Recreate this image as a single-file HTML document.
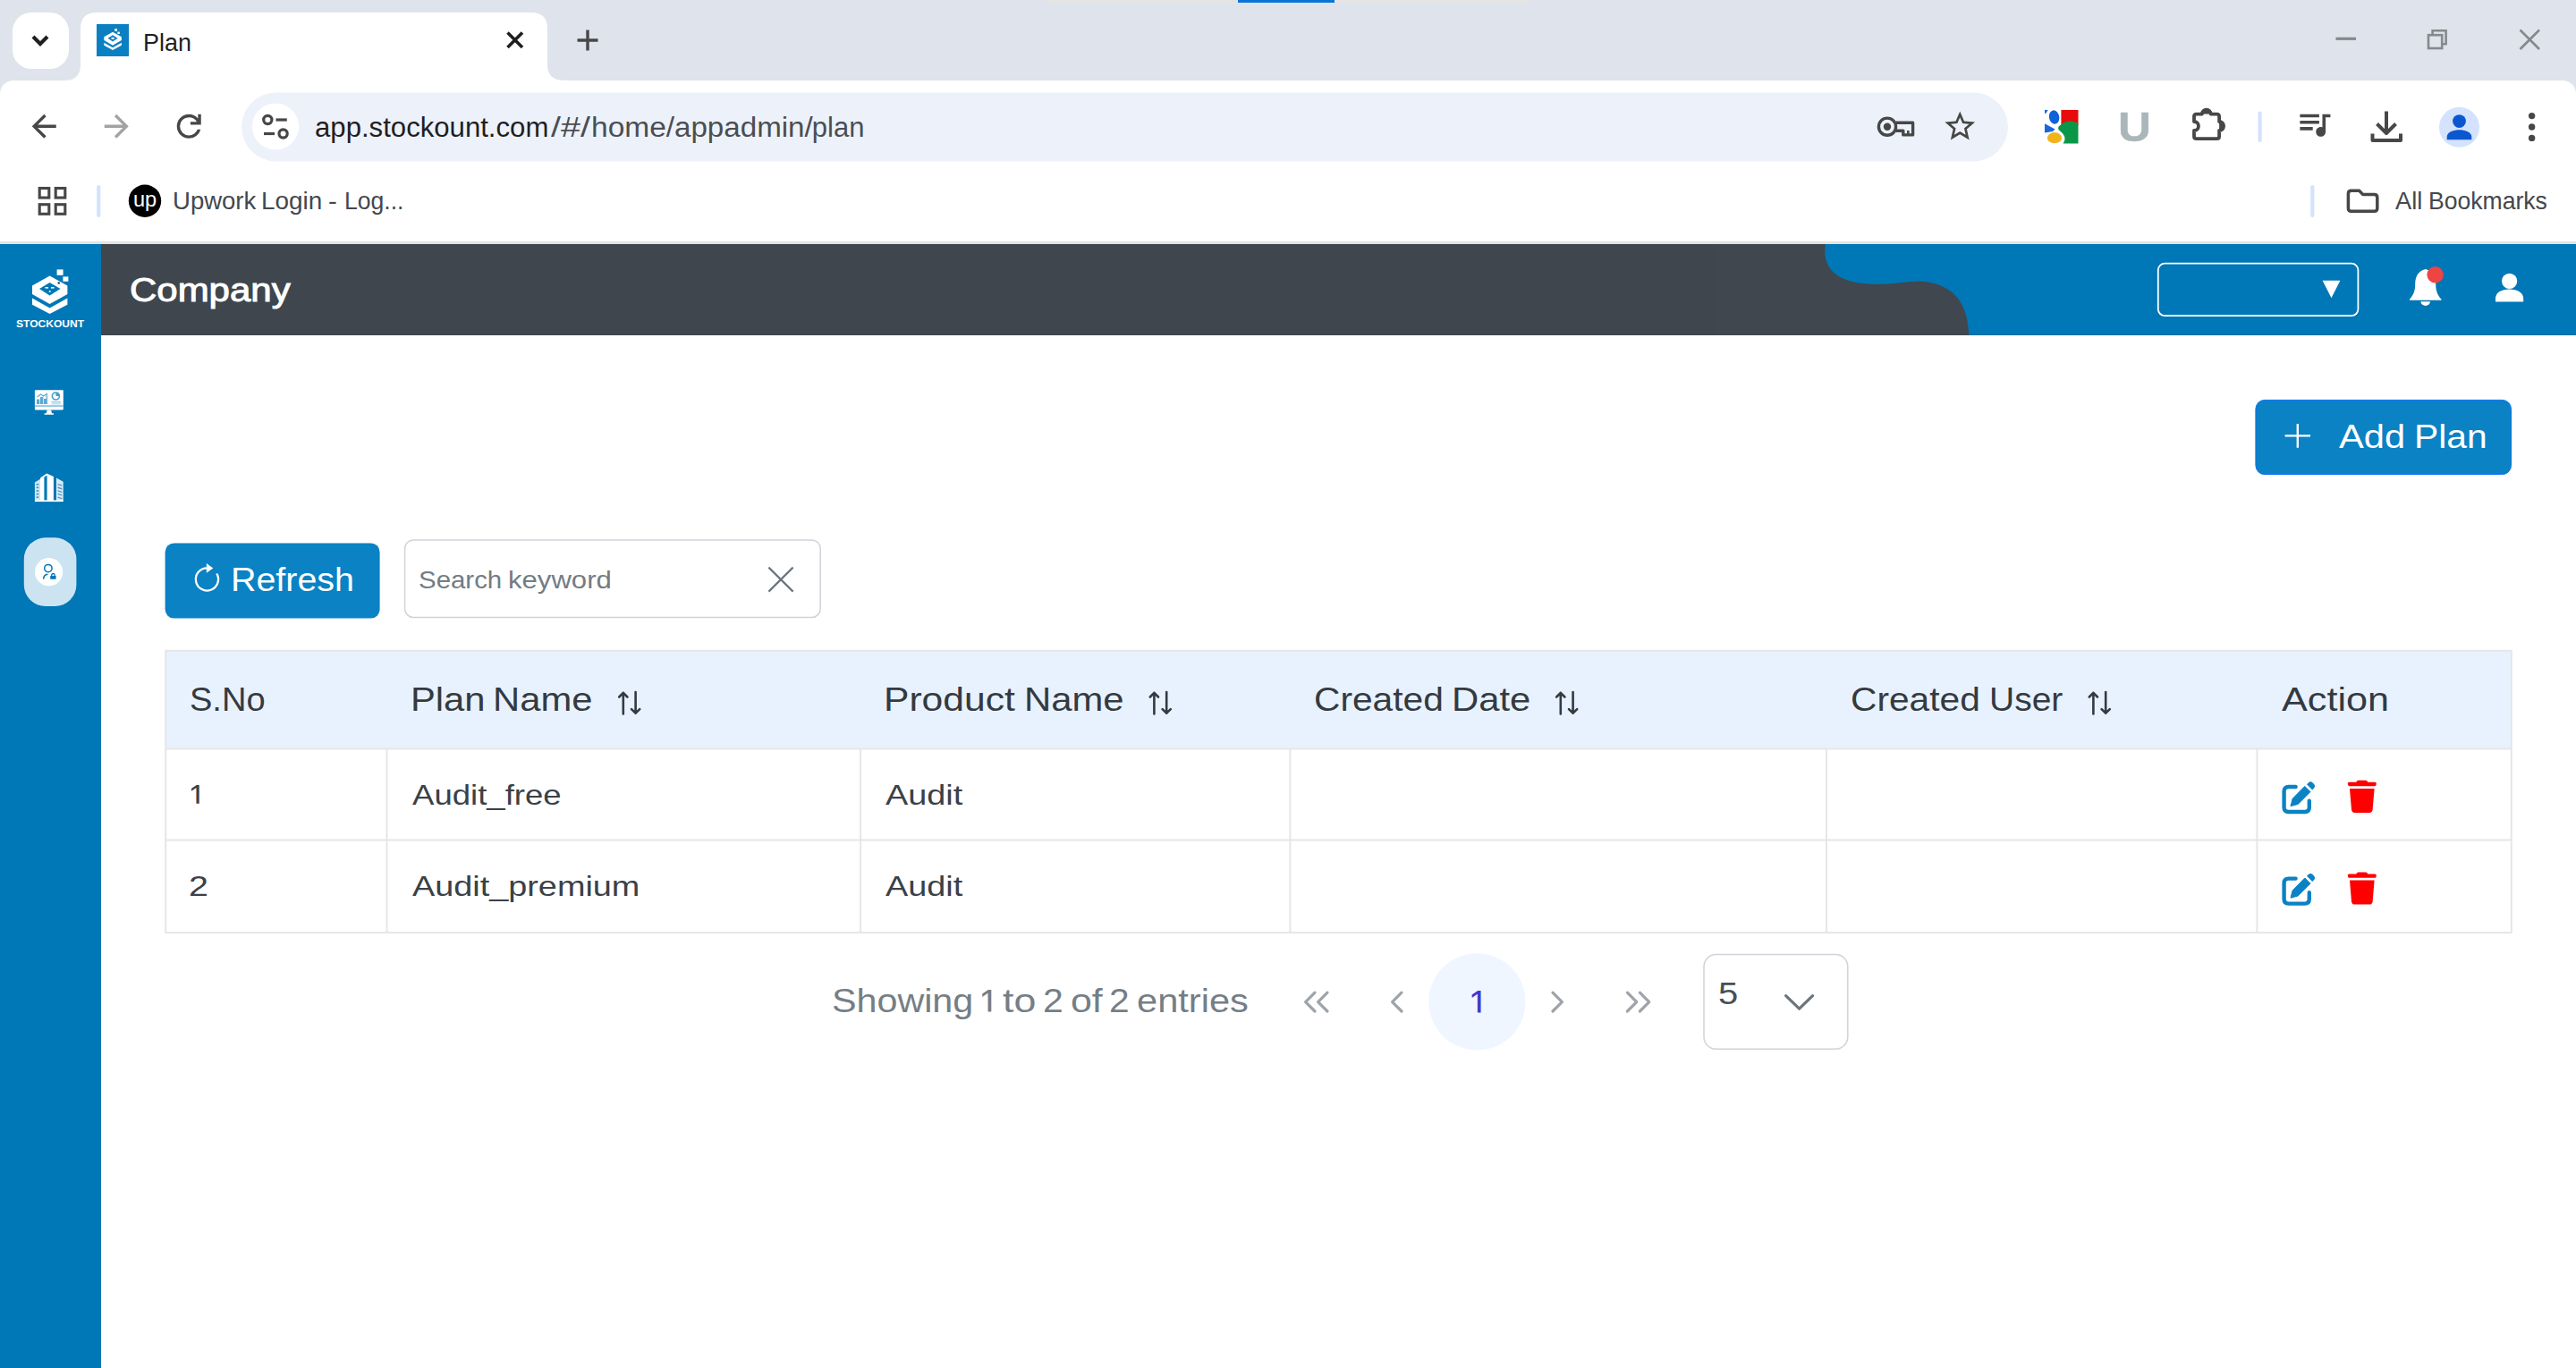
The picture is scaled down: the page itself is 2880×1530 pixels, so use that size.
<!DOCTYPE html>
<html lang="en"><head><meta charset="utf-8"><title>Plan</title>
<style>
html,body{margin:0;padding:0}
body{width:2880px;height:1530px;overflow:hidden;position:relative;background:#fff;
font-family:"Liberation Sans",sans-serif}
.a{position:absolute}
.t{position:absolute;white-space:nowrap;line-height:1;transform-origin:0 0;display:block}
svg{position:absolute;overflow:visible}
</style></head><body>
<div class="a" style="left:0;top:0;width:2880px;height:112px;background:#dee3ec"></div>
<div class="a" style="left:1168px;top:0;width:543px;height:3px;background:#e4e4e4"></div>
<div class="a" style="left:1384px;top:0;width:108px;height:3px;background:#0b74d9"></div>
<div class="a" style="left:14px;top:14px;width:63px;height:63px;border-radius:21px;background:#fff"></div>
<svg style="left:0;top:0" width="2880" height="273" viewBox="0 0 2880 273">
<path d="M37 41 L45 49 L53 41" fill="none" stroke="#1f1f1f" stroke-width="4.2"/>
<path d="M72 90 C84 90 90 84 90 72 L90 32 C90 20 96 14 108 14 L594 14 C606 14 612 20 612 32 L612 72 C612 84 618 90 632 90 Z" fill="#fff"/>
<path d="M0 273 L0 106 C0 96 6 90 16 90 L2864 90 C2874 90 2880 96 2880 106 L2880 273 Z" fill="#fff"/>
<rect x="0" y="270" width="2880" height="3" fill="#e1e3e3"/>
<rect x="270" y="103.5" width="1975" height="77" rx="38.5" fill="#edf2fa"/>
<circle cx="308" cy="141.5" r="26" fill="#fff"/>
<g fill="none" stroke="#474747" stroke-width="3.2"><circle cx="299.3" cy="134" r="4.6"/><path d="M308.5 134 H320.8"/><path d="M295 149.5 H307"/><circle cx="316.6" cy="149.5" r="4.6"/></g>
<path d="M567.5 36.5 L584 53 M584 36.5 L567.5 53" stroke="#1f1f1f" stroke-width="3.6" fill="none"/>
<path d="M645.5 45 H668.5 M657 33.5 V56.5" stroke="#474747" stroke-width="3.4" fill="none"/>
<g stroke="#85898d" fill="none" stroke-width="2.6"><path d="M2611.5 43.3 H2634" stroke-width="3.2"/><rect x="2715" y="39.2" width="15.2" height="14.8"/><path d="M2719.6 39 V34.3 H2734.6 V49.2 H2730.4"/><path d="M2817.5 33.5 L2839 55 M2839 33.5 L2817.5 55"/></g>
<rect x="2524.5" y="124.5" width="4.2" height="34.5" rx="2" fill="#d3e3fd"/>
<rect x="108.2" y="207.0" width="4.2" height="36.0" rx="2" fill="#d3e3fd"/>
<rect x="2583.2" y="207.0" width="4.2" height="36.0" rx="2" fill="#d3e3fd"/>
</svg>
<svg style="left:29.45px;top:121.35px" width="40.50" height="40.50" viewBox="0 0 24 24"><path d="M20 11H7.83l5.59-5.59L12 4l-8 8 8 8 1.41-1.41L7.83 13H20v-2z" fill="#474747" /></svg>
<svg style="left:109.95px;top:121.35px" width="40.50" height="40.50" viewBox="0 0 24 24"><path d="M12 4l-1.41 1.41L16.17 11H4v2h12.17l-5.58 5.59L12 20l8-8z" fill="#a3a3a3" /></svg>
<svg style="left:191.25px;top:121.35px" width="40.50" height="40.50" viewBox="0 0 24 24"><path d="M12 20q-3.35 0-5.675-2.325T4 12q0-3.35 2.325-5.675T12 4q1.725 0 3.3.712T18 6.75V4h2v7h-7V9h4.2q-.8-1.4-2.187-2.2T12 6Q9.5 6 7.75 7.75T6 12q0 2.5 1.75 4.25T12 18q1.925 0 3.475-1.1T17.65 14h2.1q-.7 2.65-2.85 4.325T12 20Z" fill="#474747" /></svg>
<svg style="left:2170.75px;top:121.25px" width="40.50" height="40.50" viewBox="0 0 24 24"><path d="M22 9.24l-7.19-.62L12 2 9.19 8.63 2 9.24l5.46 4.73L5.82 21 12 17.27 18.18 21l-1.63-7.03L22 9.24zM12 15.4l-3.76 2.27 1-4.28-3.32-2.88 4.38-.38L12 6.1l1.71 4.04 4.38.38-3.32 2.88 1 4.28L12 15.4z" fill="#474747" /></svg>
<svg style="left:2565.70px;top:117.10px" width="43.00" height="43.00" viewBox="0 0 24 24"><path d="M15 6H3v2h12V6zm0 4H3v2h12v-2zM3 16h8v-2H3v2zM17 6v8.18c-.31-.11-.65-.18-1-.18-1.66 0-3 1.34-3 3s1.34 3 3 3 3-1.34 3-3V8h3V6h-5z" fill="#474747" /></svg>
<svg style="left:0;top:0" width="2880" height="273" viewBox="0 0 2880 273"><g fill="none" stroke="#474747" stroke-width="3.4" stroke-linejoin="round"><path d="M2119.6 137.3 H2138.6 V150.9 H2127.8 V146.2 H2119.6"/><circle cx="2110" cy="141.7" r="9.6"/></g><circle cx="2110" cy="141.7" r="4.2" fill="#474747"/><rect x="2132" y="146" width="2.6" height="5" fill="#474747"/><g fill="none" stroke="#474747" stroke-width="4" stroke-linejoin="round"><path d="M2668 124.5 V149 M2657.5 138.5 L2668 149 L2678.5 138.5"/><path d="M2652.5 149.5 V157 H2684 V149.5"/></g><circle cx="2749.5" cy="142.3" r="22.5" fill="#d3e3fd"/><circle cx="2749.5" cy="135.6" r="7.4" fill="#0b57d0"/><path d="M2735.7 156.3 V153 C2735.7 147.5 2744 145.3 2749.5 145.3 C2755 145.3 2763.3 147.5 2763.3 153 V156.3 Z" fill="#0b57d0"/><circle cx="2830.6" cy="129.6" r="3.7" fill="#474747"/><circle cx="2830.6" cy="142.0" r="3.7" fill="#474747"/><circle cx="2830.6" cy="154.4" r="3.7" fill="#474747"/><path d="M2453 136 V130.3 Q2453 127.6 2455.7 127.6 H2461.9 A4.9 4.9 0 0 1 2471.7 127.6 H2478.4 Q2481.1 127.6 2481.1 130.3 V136 A5 5 0 0 1 2481.1 146 V152.4 Q2481.1 155.1 2478.4 155.1 H2455.7 Q2453 155.1 2453 152.4 V146 A5 5 0 0 0 2453 136 Z" fill="none" stroke="#474747" stroke-width="3.8" stroke-linejoin="round"/><path d="M2481.1 136 A5 5 0 0 1 2481.1 146 Z" fill="#474747"/><path d="M2461.9 127.6 A4.9 4.9 0 0 1 2471.7 127.6 Z" fill="#474747"/><path d="M2625.4 216.6 Q2625.4 213.3 2628.7 213.3 H2637.6 L2641.6 217.4 H2654.5 Q2657.8 217.4 2657.8 220.7 V233 Q2657.8 236.3 2654.5 236.3 H2628.7 Q2625.4 236.3 2625.4 233 Z" fill="none" stroke="#474747" stroke-width="3.5" stroke-linejoin="round"/><rect x="108" y="27" width="36" height="36" fill="#0a7fc2"/><g transform="translate(126 46) scale(.93) translate(-126 -46.6)"><g fill="#fff"><path d="M126 35.5 L136.6 41.4 V45.6 L126 51.6 L115.6 45.6 V41.4 Z"/><path d="M115.6 48.4 L126 54.4 L136.6 48.4 V51.6 L126 57.4 L115.6 51.6 Z"/><rect x="128.4" y="31.6" width="3" height="3"/><rect x="131.8" y="35.4" width="2.6" height="2.6"/></g><path d="M126 39.4 L132 43.2 L126 47.2 L120.2 43.2 Z" fill="#0a7fc2"/><rect x="124.4" y="42.2" width="3.4" height="2" fill="#fff"/></g><rect x="44.2" y="210.5" width="10.6" height="10.6" fill="none" stroke="#474747" stroke-width="3.1"/><rect x="62.2" y="210.5" width="10.6" height="10.6" fill="none" stroke="#474747" stroke-width="3.1"/><rect x="44.2" y="228.7" width="10.6" height="10.6" fill="none" stroke="#474747" stroke-width="3.1"/><rect x="62.2" y="228.7" width="10.6" height="10.6" fill="none" stroke="#474747" stroke-width="3.1"/><circle cx="162" cy="224.7" r="18.2" fill="#000"/><g><rect x="2286" y="123" width="37.5" height="37.5" fill="#fff"/><path d="M2286 123 H2289.6 L2287.6 126.4 L2286 127 Z" fill="#1a66dc"/><rect x="2304.4" y="123" width="19.1" height="17" fill="#e90b0b"/><path d="M2304.4 139.4 C2309 134.4 2318.5 134.6 2323.5 138.4 V160.5 H2306.6 C2310.4 155 2308.6 150.4 2301.6 145.2 C2300.4 142.4 2301.6 140.6 2304.4 139.4Z" fill="#0a9647"/><ellipse cx="2296.6" cy="131" rx="5.7" ry="7.7" fill="#0f62d7" transform="rotate(-10 2296.6 131)"/><path d="M2286 138.2 L2297.6 144.6 L2295 147 L2286 148.4 Z" fill="#1a66dc"/><ellipse cx="2297" cy="154.2" rx="8.1" ry="6.1" fill="#f0b51b"/></g></svg>
<span class="t" style="left:160.10px;top:33.00px;font-size:28.20px;color:#1f1f1f;transform:scaleX(0.9561);">Plan</span>
<span class="t" style="left:352.29px;top:127.00px;font-size:31.00px;color:#1f1f1f;transform:scaleX(1.0043);">app.stockount.com</span>
<span class="t" style="left:616.40px;top:127.00px;font-size:31.00px;color:#4b4e52;transform:scaleX(1.2725);">/#/</span>
<span class="t" style="left:661.13px;top:127.00px;font-size:31.00px;color:#4b4e52;transform:scaleX(1.0810);">home/</span>
<span class="t" style="left:753.51px;top:127.00px;font-size:31.00px;color:#4b4e52;transform:scaleX(1.0690);">appadmin/</span>
<span class="t" style="left:907.80px;top:127.00px;font-size:31.00px;color:#4b4e52;transform:scaleX(1.0000);">plan</span>
<span class="t" style="left:192.65px;top:210.00px;font-size:28.20px;color:#45484c;transform:scaleX(0.9764);">Upwork</span>
<span class="t" style="left:292.12px;top:210.00px;font-size:28.20px;color:#45484c;transform:scaleX(0.9892);">Login</span>
<span class="t" style="left:366.95px;top:210.00px;font-size:28.20px;color:#45484c;transform:scaleX(1.0435);">-</span>
<span class="t" style="left:384.63px;top:210.00px;font-size:28.20px;color:#45484c;transform:scaleX(0.9422);">Log...</span>
<span class="t" style="left:2677.90px;top:211.00px;font-size:28.00px;color:#45484c;transform:scaleX(0.9726);">All</span>
<span class="t" style="left:2714.62px;top:211.00px;font-size:28.00px;color:#45484c;transform:scaleX(0.9488);">Bookmarks</span>
<span class="t" style="left:2367.50px;top:119.00px;font-size:46.20px;color:#a9b6ba;font-weight:700;-webkit-text-stroke:0.40px #a9b6ba;transform:scaleX(1.1079);">U</span>
<span class="t" style="left:148.69px;top:212.00px;font-size:23.50px;color:#fff;transform:scaleX(1.0042);">up</span>
<div class="a" style="left:0;top:273px;width:112.5px;height:1257px;background:#0077b6"></div>
<div class="a" style="left:112.5px;top:273px;width:1805px;height:101.7px;background:#3f464d"></div>
<div class="a" style="left:1917.5px;top:273px;width:962.5px;height:101.7px;background:#40474e"></div>
<svg style="left:0;top:0" width="2880" height="700" viewBox="0 0 2880 700">
<path d="M2041 273 C2036 302 2056 318 2098 318 C2124 318 2140 312.5 2158 316 C2193 323 2200 350 2201.3 374.7 L2880 374.7 L2880 273 Z" fill="#0077b6"/>
<rect x="2412.8" y="294.6" width="223.6" height="58.6" rx="7.5" fill="none" stroke="#fff" stroke-width="1.8"/>
<path d="M2596.6 313.8 H2616.4 L2606.5 333.2 Z" fill="#fff"/>
<path d="M2711.7 301 C2703 303 2700.2 310 2700.2 318 C2700.2 326 2697.5 331 2694 334.6 V335.8 H2729.4 V334.6 C2725.9 331 2723.2 326 2723.2 318 C2723.2 310 2720.4 303 2711.7 301 Z" fill="#fff"/>
<path d="M2706.3 337.3 H2717.1 C2716.6 340.4 2714.4 341.9 2711.7 341.9 C2709 341.9 2706.8 340.4 2706.3 337.3 Z" fill="#fff"/>
<circle cx="2722.6" cy="307.3" r="9.2" fill="#ef4444"/>
<circle cx="2805.6" cy="314.4" r="8.6" fill="#fff"/>
<path d="M2790 337.6 V334 C2790 327 2797 323.4 2805.6 323.4 C2814.2 323.4 2821.2 327 2821.2 334 V337.6 Z" fill="#fff"/>
<g fill="#fff"><path d="M55.6 308.6 L75.4 319.5 V329 L55.6 340 L36 329 V319.5 Z"/><path d="M36 333.5 L55.6 344.5 L75.4 333.5 V340.8 L55.6 351 L36 340.8 Z"/><rect x="63.6" y="301.4" width="7" height="6.4"/><rect x="70.4" y="309.4" width="6" height="5.4"/></g><path d="M55.6 316 L67.5 323 L55.6 330.6 L44 323 Z" fill="#0077b6"/><rect x="64.6" y="315.4" width="2.2" height="2.2" fill="#12394f"/><g fill="#fff"><rect x="50.5" y="321" width="3.5" height="1.6"/><rect x="57" y="321" width="3.5" height="1.6"/><rect x="54.8" y="325" width="1.8" height="1.8"/></g>
<g><rect x="38.9" y="436.3" width="31.9" height="22.3" rx="1" fill="#fff"/><rect x="38.9" y="453.2" width="31.9" height="1.7" fill="#8cc3e0"/><path d="M52.6 458.6 H57.2 L58 462.2 H60 V463.8 H49.6 V462.2 H51.8 Z" fill="#fff"/><g fill="#5aa9d4"><rect x="41" y="446.5" width="3.3" height="5.5"/><rect x="45" y="444" width="3.3" height="8"/><rect x="49" y="446" width="3.3" height="6"/><rect x="51" y="441" width="2.4" height="11" opacity=".6"/><path d="M41.5 444 L45.5 441 L48.5 443 L53 440" fill="none" stroke="#5aa9d4" stroke-width="1.2"/></g><circle cx="62.4" cy="443" r="4" fill="none" stroke="#4a9fce" stroke-width="1.7"/><path d="M62.4 443 V439 A4 4 0 0 1 66.4 443 Z" fill="#4a9fce"/><rect x="57.5" y="449" width="10.5" height="1.3" fill="#8cc3e0"/><rect x="57.5" y="451.2" width="10.5" height="1.2" fill="#b5d8ea"/></g>
<g fill="#fff"><path d="M38.9 539.4 L45 535.8 V560.8 H38.9 Z" opacity=".82"/><path d="M45 535.8 L49.4 533.4 V560.8 H45 Z"/><path d="M45 534.6 L52.2 529.6 L59.9 533 V560.8 H52.6 V531.6 L45.4 536.4 Z"/><path d="M63 534.6 L70.7 538.8 V560.8 H63 Z" opacity=".85"/><rect x="38.9" y="559.4" width="31.8" height="1.7"/></g><g fill="#0077b6" opacity=".75"><rect x="40.6" y="541.0" width="2.6" height="1.5"/><rect x="64.6" y="541.0" width="4.6" height="1.3" transform="skewY(18)" transform-origin="64.6 541.0"/><rect x="40.6" y="544.6" width="2.6" height="1.5"/><rect x="64.6" y="544.6" width="4.6" height="1.3" transform="skewY(18)" transform-origin="64.6 544.6"/><rect x="40.6" y="548.2" width="2.6" height="1.5"/><rect x="64.6" y="548.2" width="4.6" height="1.3" transform="skewY(18)" transform-origin="64.6 548.2"/><rect x="40.6" y="551.8" width="2.6" height="1.5"/><rect x="64.6" y="551.8" width="4.6" height="1.3" transform="skewY(18)" transform-origin="64.6 551.8"/><rect x="40.6" y="555.4" width="2.6" height="1.5"/><rect x="64.6" y="555.4" width="4.6" height="1.3" transform="skewY(18)" transform-origin="64.6 555.4"/></g>
<rect x="26.8" y="601.3" width="58.6" height="76.8" rx="24" fill="#cce4f2"/><circle cx="54.6" cy="639.7" r="15.6" fill="#fff"/><circle cx="53.9" cy="635.6" r="4.2" fill="none" stroke="#0077b6" stroke-width="1.5"/><path d="M48.6 647.6 C48.8 644.6 50.6 642.6 53.4 642.3" fill="none" stroke="#0077b6" stroke-width="1.6"/><rect x="56.2" y="644" width="6.4" height="3.8" rx=".6" fill="#0077b6"/><path d="M57.7 644.4 V643.2 A1.7 1.7 0 0 1 61.1 643.2 V644.4" fill="none" stroke="#0077b6" stroke-width="1.3"/>
<rect x="2521.9" y="447.4" width="285.6" height="83.2" rx="10" fill="#0a82c4" stroke="#0d6efd" stroke-width="1"/>
<path d="M2554.6 487.4 H2583 M2568.8 474 V500.8" stroke="#fff" stroke-width="2.4" fill="none"/>
<rect x="184.6" y="607.4" width="240" height="84.2" rx="10" fill="#0a82c4"/>
<path d="M242.3 641.5 A12.6 12.6 0 1 1 231.5 635.3" fill="none" stroke="#fff" stroke-width="2.3"/><path d="M230.9 630 L238.3 635.4 L230.9 640.8 Z" fill="#fff"/>
<rect x="452.6" y="604" width="464.6" height="86.4" rx="9.5" fill="#fff" stroke="#ced4da" stroke-width="1.5"/>
<path d="M859.4 634.6 L886.6 661.6 M886.6 634.6 L859.4 661.6" stroke="#6c757d" stroke-width="2.2" fill="none"/>
</svg>
<span class="t" style="left:17.87px;top:357.00px;font-size:11.00px;color:#fff;font-weight:700;transform:scaleX(1.0957);">STOCKOUNT</span>
<span class="t" style="left:144.62px;top:307.00px;font-size:36.40px;color:#fff;-webkit-text-stroke:0.95px #fff;transform:scaleX(1.1533);">Company</span>
<span class="t" style="left:2615.09px;top:471.00px;font-size:36.60px;color:#fff;transform:scaleX(1.1388);">Add</span>
<span class="t" style="left:2698.85px;top:471.00px;font-size:36.60px;color:#fff;transform:scaleX(1.1163);">Plan</span>
<span class="t" style="left:258.15px;top:631.00px;font-size:36.40px;color:#fff;transform:scaleX(1.0827);">Refresh</span>
<span class="t" style="left:467.61px;top:635.00px;font-size:27.60px;color:#737c84;transform:scaleX(1.0664);">Search</span>
<span class="t" style="left:567.57px;top:635.00px;font-size:27.60px;color:#737c84;transform:scaleX(1.1270);">keyword</span>
<svg style="left:0;top:0" width="2880" height="1530" viewBox="0 0 2880 1530">
<rect x="185.2" y="727.8" width="2622.6" height="109.8" fill="#e8f2fe"/>
<g stroke="#e5e6e7" stroke-width="2" fill="none"><rect x="185.2" y="727.8" width="2622.6" height="315.3"/><path d="M185.2 837.6 H2807.8 M185.2 939.5 H2807.8"/><path d="M432.5 837.6 V1043.1"/><path d="M962.1 837.6 V1043.1"/><path d="M1442.4 837.6 V1043.1"/><path d="M2042.0 837.6 V1043.1"/><path d="M2523.4 837.6 V1043.1"/></g>
<g stroke="#343a40" stroke-width="2.6" fill="none" stroke-linejoin="round" stroke-linecap="round"><path d="M696.8 798.5 V774.9 M692.2 779.5 L696.8 774.9 L701.4 779.5"/><path d="M710.6 774.1 V797.7 M706.0 793.1 L710.6 797.7 L715.2 793.1"/></g>
<g stroke="#343a40" stroke-width="2.6" fill="none" stroke-linejoin="round" stroke-linecap="round"><path d="M1290.4 798.5 V774.9 M1285.8 779.5 L1290.4 774.9 L1295.0 779.5"/><path d="M1304.2 774.1 V797.7 M1299.6 793.1 L1304.2 797.7 L1308.8 793.1"/></g>
<g stroke="#343a40" stroke-width="2.6" fill="none" stroke-linejoin="round" stroke-linecap="round"><path d="M1744.8 798.5 V774.9 M1740.2 779.5 L1744.8 774.9 L1749.4 779.5"/><path d="M1758.6 774.1 V797.7 M1754.0 793.1 L1758.6 797.7 L1763.2 793.1"/></g>
<g stroke="#343a40" stroke-width="2.6" fill="none" stroke-linejoin="round" stroke-linecap="round"><path d="M2340.4 798.5 V774.9 M2335.8 779.5 L2340.4 774.9 L2345.0 779.5"/><path d="M2354.2 774.1 V797.7 M2349.6 793.1 L2354.2 797.7 L2358.8 793.1"/></g>
<g transform="translate(2551.2 873.2)"><path d="M15.4 6.8 H7.4 C4.2 6.8 2.4 8.6 2.4 11.8 V29.8 C2.4 33 4.2 34.8 7.4 34.8 H25.6 C28.8 34.8 30.6 33 30.6 29.8 V22.4" fill="none" stroke="#0a82c4" stroke-width="4.4" stroke-linecap="round"/><path d="M25.6 6.2 L31.8 12.4 L18 26.2 L9.8 28.4 L12 20 Z" fill="#0a82c4" stroke="#0a82c4" stroke-width="1" stroke-linejoin="round"/><path d="M27.8 4 L29.6 2.2 C31 .8 33 .8 34.4 2.2 L35.8 3.6 C37.2 5 37.2 7 35.8 8.4 L34 10.2 Z" fill="#0a82c4"/></g>
<g transform="translate(2624.8 872.8)" fill="#ff0000"><path d="M9.6 2 C10 .8 10.8 0 12 0 H20 C21.2 0 22 .8 22.4 2 H30.4 C31.4 2 32 2.8 32 3.8 C32 5.4 31.2 6.4 30 6.4 H2 C.8 6.4 0 5.4 0 3.8 C0 2.8 .6 2 1.6 2 Z"/><path d="M2.2 9.2 H29.8 L27.8 33 C27.6 35 26.2 36.2 24.4 36.2 H7.6 C5.8 36.2 4.4 35 4.2 33 Z"/></g>
<g transform="translate(2551.2 975.8)"><path d="M15.4 6.8 H7.4 C4.2 6.8 2.4 8.6 2.4 11.8 V29.8 C2.4 33 4.2 34.8 7.4 34.8 H25.6 C28.8 34.8 30.6 33 30.6 29.8 V22.4" fill="none" stroke="#0a82c4" stroke-width="4.4" stroke-linecap="round"/><path d="M25.6 6.2 L31.8 12.4 L18 26.2 L9.8 28.4 L12 20 Z" fill="#0a82c4" stroke="#0a82c4" stroke-width="1" stroke-linejoin="round"/><path d="M27.8 4 L29.6 2.2 C31 .8 33 .8 34.4 2.2 L35.8 3.6 C37.2 5 37.2 7 35.8 8.4 L34 10.2 Z" fill="#0a82c4"/></g>
<g transform="translate(2624.8 975.4)" fill="#ff0000"><path d="M9.6 2 C10 .8 10.8 0 12 0 H20 C21.2 0 22 .8 22.4 2 H30.4 C31.4 2 32 2.8 32 3.8 C32 5.4 31.2 6.4 30 6.4 H2 C.8 6.4 0 5.4 0 3.8 C0 2.8 .6 2 1.6 2 Z"/><path d="M2.2 9.2 H29.8 L27.8 33 C27.6 35 26.2 36.2 24.4 36.2 H7.6 C5.8 36.2 4.4 35 4.2 33 Z"/></g>
<circle cx="1651.4" cy="1120.4" r="54.1" fill="#eff6ff"/>
<g fill="none" stroke="#9ea4aa" stroke-width="3.2" stroke-linecap="round" stroke-linejoin="round"><path d="M1470 1110.2 L1459.6 1120.6 L1470 1131 M1484 1110.2 L1473.6 1120.6 L1484 1131"/><path d="M1567 1110.2 L1556.6 1120.6 L1567 1131"/><path d="M1736 1110.2 L1746.4 1120.6 L1736 1131"/><path d="M1819.4 1110.2 L1829.8 1120.6 L1819.4 1131 M1833.4 1110.2 L1843.8 1120.6 L1833.4 1131"/></g>
<rect x="1905" y="1067.6" width="160.8" height="105.6" rx="13.5" fill="#fff" stroke="#ced4da" stroke-width="1.5"/>
<path d="M1996.6 1113.6 L2011.6 1128.2 L2026.6 1113.6" fill="none" stroke="#6c757d" stroke-width="3.2" stroke-linecap="round" stroke-linejoin="round"/>
</svg>
<span class="t" style="left:212.23px;top:765.00px;font-size:36.60px;color:#343a40;transform:scaleX(1.0397);">S.No</span>
<span class="t" style="left:458.68px;top:765.00px;font-size:36.60px;color:#343a40;transform:scaleX(1.1414);">Plan</span>
<span class="t" style="left:551.27px;top:765.00px;font-size:36.60px;color:#343a40;transform:scaleX(1.1419);">Name</span>
<span class="t" style="left:987.50px;top:765.00px;font-size:36.60px;color:#343a40;transform:scaleX(1.1652);">Product</span>
<span class="t" style="left:1144.77px;top:765.00px;font-size:36.60px;color:#343a40;transform:scaleX(1.1441);">Name</span>
<span class="t" style="left:1469.00px;top:765.00px;font-size:36.60px;color:#343a40;transform:scaleX(1.1134);">Created</span>
<span class="t" style="left:1623.37px;top:765.00px;font-size:36.60px;color:#343a40;transform:scaleX(1.1431);">Date</span>
<span class="t" style="left:2069.00px;top:765.00px;font-size:36.60px;color:#343a40;transform:scaleX(1.1134);">Created</span>
<span class="t" style="left:2223.81px;top:765.00px;font-size:36.60px;color:#343a40;transform:scaleX(1.0663);">User</span>
<span class="t" style="left:2550.68px;top:765.00px;font-size:36.60px;color:#343a40;transform:scaleX(1.1803);">Action</span>
<span class="t" style="left:210.59px;top:873.00px;font-size:35.62px;color:#3a4147;transform:scaleX(1.0000);clip-path:inset(0 0 9.76px 0);">1</span>
<span class="t" style="left:461.29px;top:874.00px;font-size:31.80px;color:#3a4147;transform:scaleX(1.1498);">Audit_free</span>
<span class="t" style="left:990.08px;top:874.00px;font-size:31.80px;color:#3a4147;transform:scaleX(1.1900);">Audit</span>
<span class="t" style="left:211.21px;top:976.00px;font-size:31.80px;color:#3a4147;transform:scaleX(1.2414);">2</span>
<span class="t" style="left:461.28px;top:976.00px;font-size:31.80px;color:#3a4147;transform:scaleX(1.1894);">Audit_premium</span>
<span class="t" style="left:990.08px;top:976.00px;font-size:31.80px;color:#3a4147;transform:scaleX(1.1900);">Audit</span>
<span class="t" style="left:930.28px;top:1102.00px;font-size:36.50px;color:#757e86;transform:scaleX(1.1301);">Showing</span>
<span class="t" style="left:1094.28px;top:1101.00px;font-size:40.88px;color:#757e86;transform:scaleX(1.0000);clip-path:inset(0 0 10.42px 0);">1</span>
<span class="t" style="left:1121.19px;top:1102.00px;font-size:36.50px;color:#757e86;transform:scaleX(1.2254);">to</span>
<span class="t" style="left:1166.18px;top:1102.00px;font-size:36.50px;color:#757e86;transform:scaleX(1.1198);">2</span>
<span class="t" style="left:1196.54px;top:1102.00px;font-size:36.50px;color:#757e86;transform:scaleX(1.1759);">of</span>
<span class="t" style="left:1239.70px;top:1102.00px;font-size:36.50px;color:#757e86;transform:scaleX(1.1138);">2</span>
<span class="t" style="left:1270.89px;top:1102.00px;font-size:36.50px;color:#757e86;transform:scaleX(1.1396);">entries</span>
<span class="t" style="left:1641.69px;top:1102.00px;font-size:40.32px;color:#4338ca;transform:scaleX(1.0000);clip-path:inset(0 0 9.82px 0);">1</span>
<span class="t" style="left:1920.63px;top:1094.00px;font-size:35.60px;color:#495057;transform:scaleX(1.1243);">5</span>
</body></html>
